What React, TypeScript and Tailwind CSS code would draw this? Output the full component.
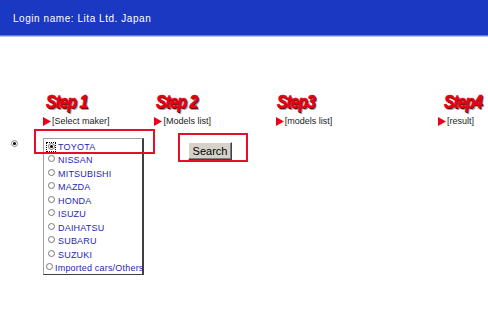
import React from "react";

const makers = [
  "TOYOTA",
  "NISSAN",
  "MITSUBISHI",
  "MAZDA",
  "HONDA",
  "ISUZU",
  "DAIHATSU",
  "SUBARU",
  "SUZUKI",
  "Imported cars/Others",
];

function Tri() {
  return (
    <svg width="8" height="9" viewBox="0 0 8 9" className="shrink-0">
      <polygon points="0,0 8,4.5 0,9" fill="#e8001c" />
    </svg>
  );
}

function StepTitle({ text, indent }: { text: string; indent: string }) {
  return (
    <div
      className={`${indent} text-[18px] leading-[16px] font-black italic tracking-[-1px] text-[#e60012]`}
      style={{
        fontFamily: '"Liberation Sans", Arial, sans-serif',
        textShadow: "1px 1px 0 #5a0000, 2px 2px 0 #a0a0a0",
        transform: "scaleX(0.86)",
        transformOrigin: "left",
        WebkitTextStroke: "0.6px #e60012",
      }}
    >
      {text}
    </div>
  );
}

function StepLabel({ text }: { text: string }) {
  return (
    <div className="flex items-center gap-[1px] h-[10px]">
      <Tri />
      <span className="text-[9px] leading-[10px] text-[#222]" style={{ fontFamily: '"Liberation Sans", Arial, sans-serif' }}>
        {text}
      </span>
    </div>
  );
}

function SmallRadio({ checked }: { checked?: boolean }) {
  return (
    <span className="relative flex w-[7px] h-[7px] rounded-full border border-[#777] bg-white items-center justify-center shrink-0">
      {checked && <span className="w-[3px] h-[3px] rounded-full bg-black" />}
    </span>
  );
}

export default function App() {
  return (
    <div className="w-[488px] h-[323px] bg-white" style={{ fontFamily: '"Liberation Sans", Arial, sans-serif' }}>
      <div className="h-[35px] bg-[#1b38c2] flex items-center pl-[13px] pt-[1px]">
        <span className="text-white text-[10px] tracking-[0.55px]" style={{ fontFamily: '"Liberation Sans", Arial, sans-serif' }}>
          Login name: Lita Ltd. Japan
        </span>
      </div>
      <div className="h-[1px] bg-[#5f7ae6]" />
      <div className="h-[1px] bg-[#b9c6f4]" />

      <div className="pt-[57px] pl-[43px] flex">
        <div className="w-[112px] flex flex-col gap-[6px]">
          <StepTitle text="Step 1" indent="ml-[3px]" />
          <StepLabel text="[Select maker]" />
        </div>
        <div className="w-[122px] flex flex-col gap-[6px]">
          <StepTitle text="Step 2" indent="ml-[2px]" />
          <StepLabel text="[Models list]" />
        </div>
        <div className="w-[163px] flex flex-col gap-[6px]">
          <StepTitle text="Step3" indent="ml-[1px]" />
          <StepLabel text="[models list]" />
        </div>
        <div className="flex flex-col gap-[6px]">
          <StepTitle text="Step4" indent="ml-[6px]" />
          <StepLabel text="[result]" />
        </div>
      </div>

      <div className="flex items-start pt-[3px]">
        <div className="w-[43px] pl-[11px] pt-[11px] flex">
          <span className="flex w-[7px] h-[7px] rounded-full border border-[#888] bg-white items-center justify-center">
            <span className="w-[3px] h-[3px] rounded-full bg-black" />
          </span>
        </div>
        <div className="relative w-[101px] mt-[9px]">
          <div className="border-t border-l border-[#a0a0a0] border-r-2 border-r-[#404040] border-b border-b-[#404040] pt-[1px] pl-[2px] h-[137px]">
            {makers.map((m, i) => (
              <div key={m} className="flex items-center h-[13.5px] gap-[2px]">
                {i === 0 ? (
                  <span className="flex w-[10px] h-[10px] border border-dotted border-black items-center justify-center">
                    <SmallRadio checked />
                  </span>
                ) : (
                  <span className="flex w-[10px] h-[10px] items-start justify-center">
                    <SmallRadio />
                  </span>
                )}
                <span
                  className="text-[9px] leading-[10px] text-[#1f1fb8] whitespace-nowrap tracking-[0.2px]"
                  style={{ fontFamily: '"Liberation Sans", Arial, sans-serif' }}
                >
                  {m}
                </span>
              </div>
            ))}
          </div>
          <div className="absolute left-[-9px] top-[-9px] w-[121px] h-[25px] border-2 border-[#e3102c] pointer-events-none" />
        </div>
        <div className="ml-[34px] mt-[4px] w-[70px] h-[29px] border-2 border-[#e3102c] pl-[8px] pt-[3px]">
          <button
            className="w-[44px] h-[18px] bg-[#d6d2ca] border border-t-white border-l-white border-r-[#404040] border-b-[#404040] text-[11px] leading-[14px] text-black"
            style={{ fontFamily: '"Liberation Sans", Arial, sans-serif', boxShadow: "inset -1px -1px 0 #808080" }}
          >
            Search
          </button>
        </div>
      </div>
    </div>
  );
}
